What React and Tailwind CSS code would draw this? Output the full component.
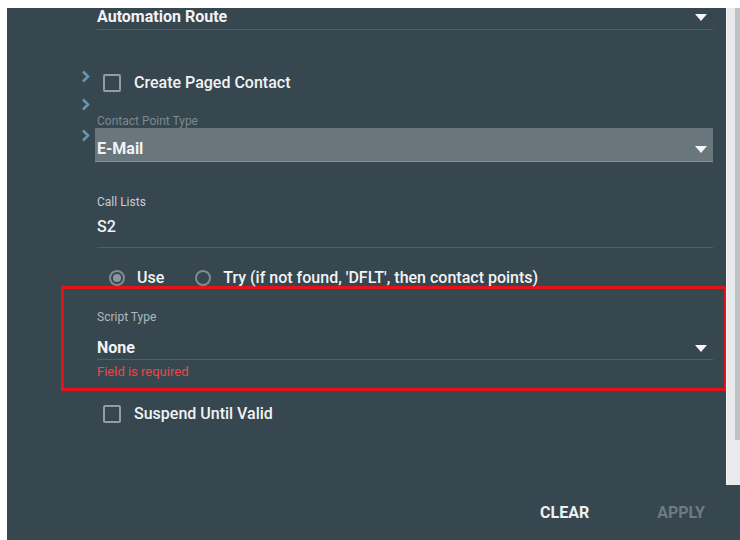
const Caret = () => (
  <svg width="12" height="7" viewBox="0 0 12 7" className="mr-[6px] shrink-0">
    <polygon points="0,0 12,0 6,7" fill="#f4f6f7" />
  </svg>
);

const Chevron = ({ top }) => (
  <svg
    width="9"
    height="13"
    viewBox="0 0 9 13"
    className="absolute left-[74px]"
    style={{ top }}
  >
    <polyline points="2,1.5 7,6.5 2,11.5" fill="none" stroke="#6895ad" strokeWidth="2.6" />
  </svg>
);

const Checkbox = ({ label, className = "" }) => (
  <div className={`flex items-center pl-[6px] h-[18px] ${className}`}>
    <span className="w-[18px] h-[18px] rounded-[2px] border-2 border-[#939ca1] shrink-0" />
    <span className="ml-[13px] text-[16px] leading-5 font-medium text-[#f1f3f4]">{label}</span>
  </div>
);

const Radio = ({ checked, label }) => (
  <div className="flex items-center">
    <span className="w-4 h-4 rounded-full border-2 border-[#7f8b91] flex items-center justify-center shrink-0">
      {checked && <span className="w-2 h-2 rounded-full bg-[#8d989e]" />}
    </span>
    <span className="ml-3 text-[16px] leading-5 font-medium text-[#f1f3f4]">{label}</span>
  </div>
);

export default function App() {
  return (
    <div
      className="w-[740px] h-[540px] bg-white pl-[7px] pt-[8px] overflow-hidden"
      style={{ fontFamily: "Roboto, 'Liberation Sans', sans-serif" }}
    >
      <div className="w-[733px] h-[532px] bg-[#37474f] flex flex-col">
        <div className="flex h-[477px]">
          {/* form body */}
          <div className="relative flex-1 overflow-hidden pl-[90px] pr-[13px]">
            <Chevron top={62} />
            <Chevron top={90} />
            <Chevron top={121} />

            <div className="mt-[-1px] pb-[2px] border-b border-[#4f5f67] flex items-center justify-between">
              <span className="text-[16px] leading-5 font-bold text-[#f1f3f4]">Automation Route</span>
              <Caret />
            </div>

            <Checkbox label="Create Paged Contact" className="mt-[44px]" />

            <div className="mt-[23px] text-[12px] leading-[13px] text-[#7c898f]">Contact Point Type</div>
            <div className="ml-[-2px] pl-[2px] h-[34px] bg-[#69767c] border-b border-[#85929a] pt-[11px] flex items-start justify-between">
              <span className="text-[16px] leading-5 font-bold text-[#f1f3f4]">E-Mail</span>
              <span className="mt-[7px]"><Caret /></span>
            </div>

            <div className="mt-[33px] text-[12px] leading-[14px] text-[#c7cdd0]">Call Lists</div>
            <div className="mt-[8px] pb-[10px] border-b border-[#4f5f67] text-[16px] leading-5 font-medium text-[#f1f3f4]">
              S2
            </div>

            <div className="mt-[22px] pl-[12px] flex items-center gap-[31px] h-4">
              <Radio checked label="Use" />
              <Radio label="Try (if not found, 'DFLT', then contact points)" />
            </div>

            <div className="ml-[-36px] mr-[-14px] pl-[33px] pr-[11px] pt-[21px] pb-[9px] border-[3px] border-[#e3131b]">
              <div className="text-[12px] leading-[14px] text-[#b0b8bc]">Script Type</div>
              <div className="mt-[14px] pb-[1px] border-b border-[#4f5f67] flex items-center justify-between">
                <span className="text-[16px] leading-5 font-bold text-[#f1f3f4]">None</span>
                <Caret />
              </div>
              <div className="mt-[5px] text-[13px] leading-[14px] text-[#e8474c]">Field is required</div>
            </div>

            <Checkbox label="Suspend Until Valid" className="mt-[14px]" />
          </div>

          {/* scrollbar */}
          <div className="w-[14px] bg-[#e9eaeb] border-l border-[#f7f7f7] flex justify-end">
            <div className="w-[5px] h-[432px] bg-[#bcc3c7]" />
          </div>
        </div>

        <div className="flex justify-end gap-[68px] pr-[35px] pt-[18px] text-[16px] leading-5 font-bold">
          <button className="text-[#eef1f2]">CLEAR</button>
          <button className="text-[#6d7c84]">APPLY</button>
        </div>
      </div>
    </div>
  );
}
